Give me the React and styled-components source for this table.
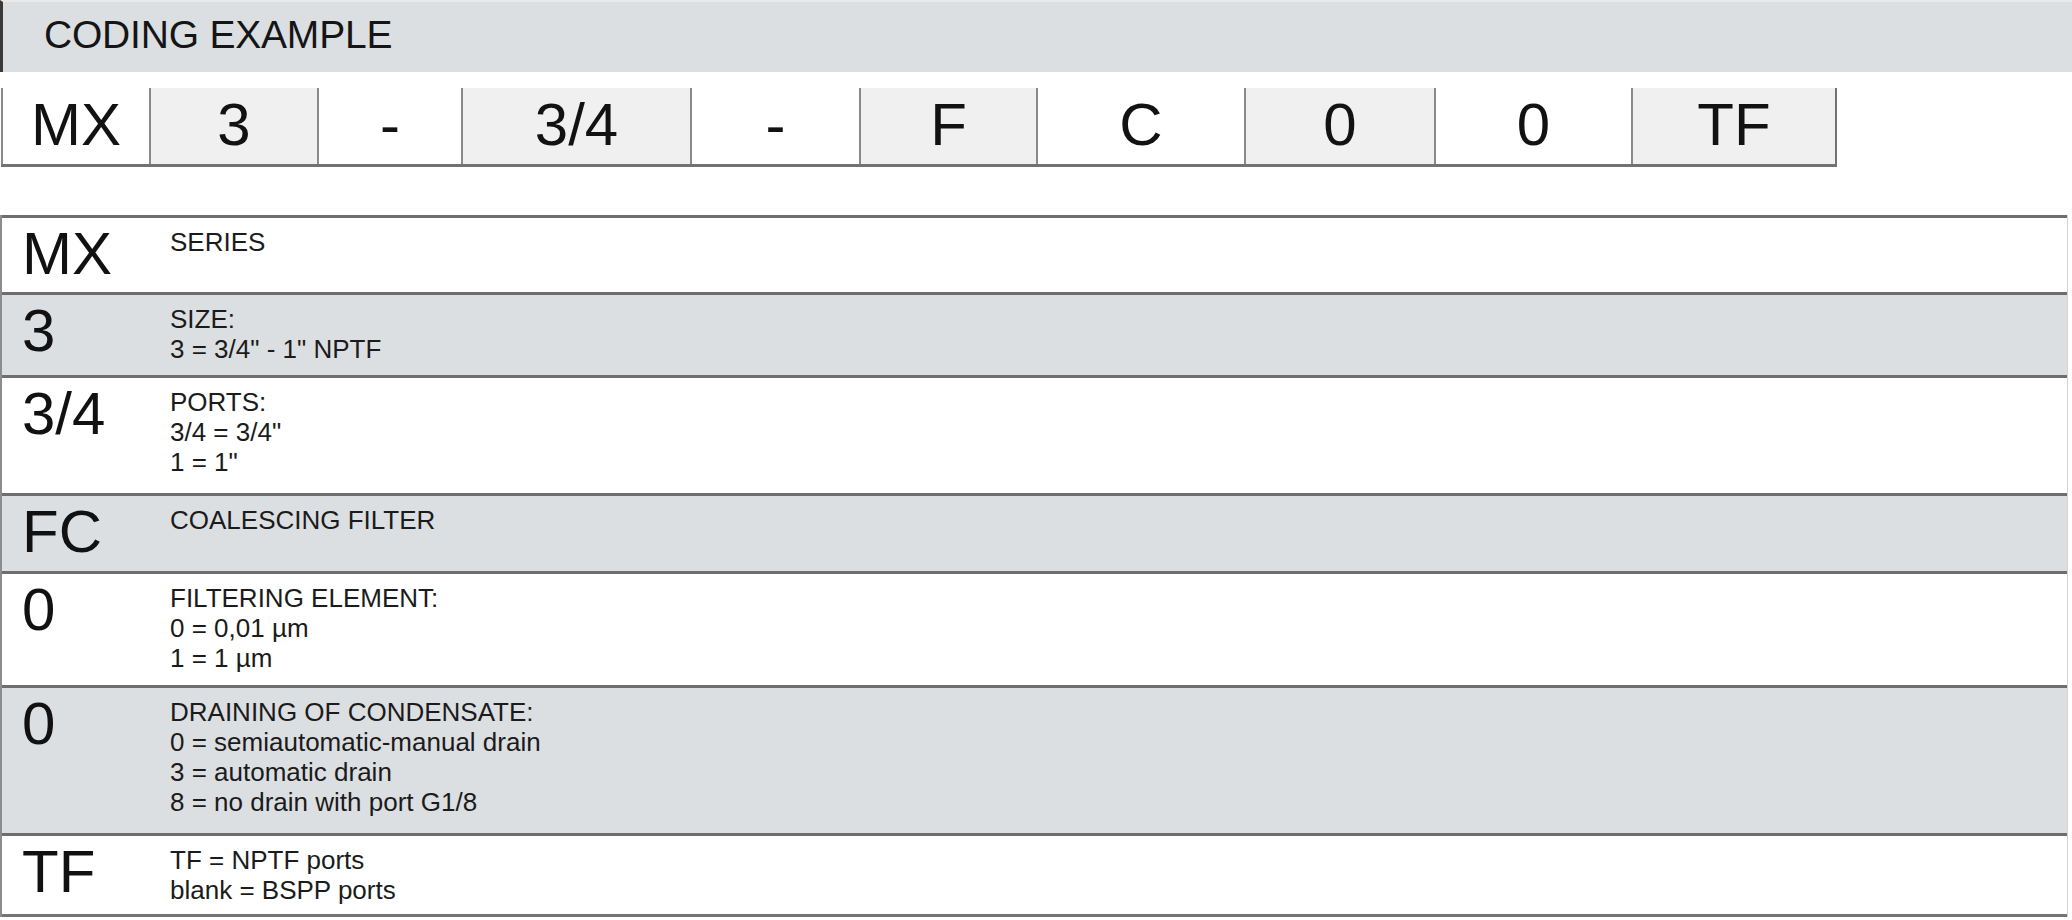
import React from "react";
import styled, { createGlobalStyle } from "styled-components";

const GlobalStyle = createGlobalStyle`
  html, body {
    margin: 0;
    padding: 0;
    background: #ffffff;
  }
  body {
    font-family: "Liberation Sans", Arial, Helvetica, sans-serif;
    color: #141414;
  }
`;

const Page = styled.div`
  width: 2072px;
  height: 920px;
  overflow: hidden;
  display: flex;
  flex-direction: column;
  background: #fff;
`;

const Header = styled.div`
  height: 72px;
  box-sizing: border-box;
  display: flex;
  align-items: center;
  padding: 0 0 4px 41px;
  background: #dcdfe2;
  border-left: 3px solid #3a3a3a;
  border-top: 2px solid #e9e9e9;
  font-size: 39px;
  letter-spacing: -0.2px;
  color: #151515;
`;

const CodeBar = styled.div`
  display: flex;
  align-self: flex-start;
  margin: 16px 0 0 1px;
  height: 79px;
  box-sizing: border-box;
  border-bottom: 3px solid #727272;
  border-right: 2px solid #727272;
`;

const CodeCell = styled.div`
  width: ${p => p.$w}px;
  box-sizing: border-box;
  display: flex;
  align-items: center;
  justify-content: center;
  padding-bottom: 2px;
  border-left: 2px solid #8a8a8a;
  background: ${p => (p.$shade ? "#f0f0f0" : "#ffffff")};
  font-size: 60px;
  line-height: 1;
  color: #121212;
`;

const Table = styled.div`
  margin-top: 48px;
  width: 2068px;
  box-sizing: border-box;
  border-left: 2px solid #8c8c8c;
  border-right: 1px solid #d4d4d4;
  display: flex;
  flex-direction: column;
`;

const Row = styled.div`
  height: ${p => p.$h}px;
  box-sizing: border-box;
  display: grid;
  grid-template-columns: 168px 1fr;
  align-items: start;
  border-top: 3px solid #6e6e6e;
  background: ${p => (p.$shade ? "#dcdfe2" : "#ffffff")};
  &:last-child {
    border-bottom: 3px solid #747474;
  }
`;

const Key = styled.div`
  padding: 6px 0 0 20px;
  font-size: 60px;
  line-height: 1;
  color: #111;
`;

const Desc = styled.div`
  padding-top: 9px;
  font-size: 26px;
  line-height: 30px;
  color: #1b1b1b;
`;

const Line = styled.div`
  white-space: pre;
`;

const code = [
  { t: "MX", w: 148, shade: false },
  { t: "3", w: 168, shade: true },
  { t: "-", w: 144, shade: false },
  { t: "3/4", w: 229, shade: true },
  { t: "-", w: 169, shade: false },
  { t: "F", w: 177, shade: true },
  { t: "C", w: 208, shade: false },
  { t: "0", w: 190, shade: true },
  { t: "0", w: 197, shade: false },
  { t: "TF", w: 204, shade: true },
];

const rows = [
  { k: "MX", h: 77, lines: ["SERIES"] },
  { k: "3", h: 83, shade: true, lines: ["SIZE:", '3 = 3/4" - 1" NPTF'] },
  { k: "3/4", h: 118, lines: ["PORTS:", '3/4 = 3/4"', '1 = 1"'] },
  { k: "FC", h: 78, shade: true, lines: ["COALESCING FILTER"] },
  { k: "0", h: 114, lines: ["FILTERING ELEMENT:", "0 = 0,01 µm", "1 = 1 µm"] },
  {
    k: "0",
    h: 148,
    shade: true,
    lines: [
      "DRAINING OF CONDENSATE:",
      "0 = semiautomatic-manual drain",
      "3 = automatic drain",
      "8 = no drain with port G1/8",
    ],
  },
  { k: "TF", h: 84, lines: ["TF = NPTF ports", "blank = BSPP ports"] },
];

export default function App() {
  return (
    <Page>
      <GlobalStyle />
      <Header>CODING EXAMPLE</Header>
      <CodeBar>
        {code.map((c, i) => (
          <CodeCell key={i} $w={c.w} $shade={c.shade}>
            {c.t}
          </CodeCell>
        ))}
      </CodeBar>
      <Table>
        {rows.map((r, i) => (
          <Row key={i} $h={r.h} $shade={r.shade}>
            <Key>{r.k}</Key>
            <Desc>
              {r.lines.map((l, j) => (
                <Line key={j}>{l}</Line>
              ))}
            </Desc>
          </Row>
        ))}
      </Table>
    </Page>
  );
}
